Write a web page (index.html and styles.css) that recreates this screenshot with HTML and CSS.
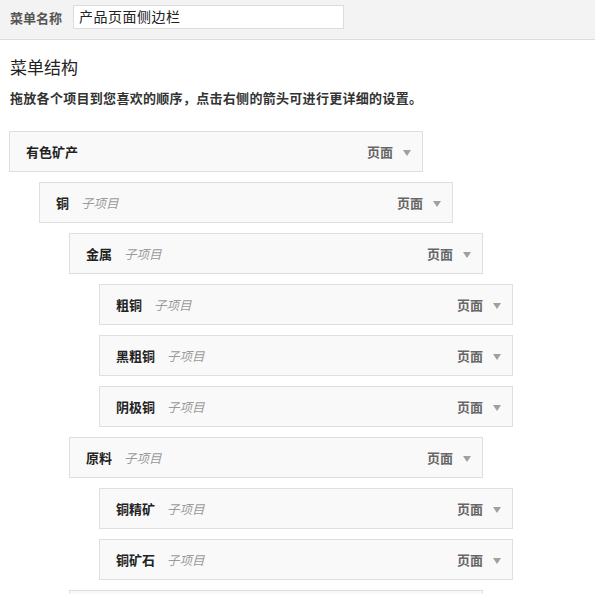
FILE: index.html
```html
<!DOCTYPE html>
<html lang="zh-CN">
<head>
<meta charset="utf-8">
<title>菜单</title>
<link rel="stylesheet" href="styles.css">
</head>
<body>
<div class="header">
  <label class="name-label">菜单名称</label>
  <div class="name-input">产品页面侧边栏</div>
</div>
<div class="main">
  <h2 class="title">菜单结构</h2>
  <p class="hint">拖放各个项目到您喜欢的顺序，点击右侧的箭头可进行更详细的设置。</p>
  <ul class="menu">
    <li class="item depth-0"><span class="item-title">有色矿产</span><span class="item-type">页面</span><span class="arrow"></span></li>
    <li class="item depth-1"><span class="item-title">铜</span><span class="item-sub">子项目</span><span class="item-type">页面</span><span class="arrow"></span></li>
    <li class="item depth-2"><span class="item-title">金属</span><span class="item-sub">子项目</span><span class="item-type">页面</span><span class="arrow"></span></li>
    <li class="item depth-3"><span class="item-title">粗铜</span><span class="item-sub">子项目</span><span class="item-type">页面</span><span class="arrow"></span></li>
    <li class="item depth-3"><span class="item-title">黑粗铜</span><span class="item-sub">子项目</span><span class="item-type">页面</span><span class="arrow"></span></li>
    <li class="item depth-3"><span class="item-title">阴极铜</span><span class="item-sub">子项目</span><span class="item-type">页面</span><span class="arrow"></span></li>
    <li class="item depth-2"><span class="item-title">原料</span><span class="item-sub">子项目</span><span class="item-type">页面</span><span class="arrow"></span></li>
    <li class="item depth-3"><span class="item-title">铜精矿</span><span class="item-sub">子项目</span><span class="item-type">页面</span><span class="arrow"></span></li>
    <li class="item depth-3"><span class="item-title">铜矿石</span><span class="item-sub">子项目</span><span class="item-type">页面</span><span class="arrow"></span></li>
    <li class="item depth-2"></li>
  </ul>
</div>
</body>
</html>
```

FILE: styles.css
```css
html, body {
  margin: 0;
  padding: 0;
  background: #fff;
  font-family: "Noto Sans CJK SC", "Noto Sans", sans-serif;
  color: #222;
}

.header {
  height: 39px;
  background: #f3f3f3;
  border-bottom: 1px solid #dcdcdc;
  display: flex;
  align-items: center;
  padding-left: 10px;
}

.name-label {
  font-size: 13px;
  font-weight: bold;
  color: #555;
  width: 63px;
  line-height: 18px;
  margin-top: -4px;
}

.name-input {
  box-sizing: border-box;
  width: 271px;
  height: 24px;
  margin-top: -5px;
  background: #fff;
  border: 1px solid #dcdcdc;
  font-size: 14px;
  letter-spacing: 0.5px;
  line-height: 21px;
  padding-left: 5px;
  color: #222;
}

.main {
  padding: 0 10px;
}

.title {
  margin: 15px 0 0;
  font-size: 17px;
  font-weight: normal;
  line-height: 24px;
  color: #222;
}

.hint {
  margin: 10px 0 0;
  font-size: 13px;
  font-weight: bold;
  letter-spacing: 0.3px;
  line-height: 18px;
  color: #333;
}

.menu {
  list-style: none;
  margin: 24px 0 0 -1px;
  padding: 0;
}

.item {
  box-sizing: border-box;
  width: 414px;
  height: 41px;
  margin-bottom: 10px;
  background: #f9f9f9;
  border: 1px solid #dfdfdf;
  display: flex;
  align-items: center;
  padding: 0 11px 0 16px;
}

.depth-1 { margin-left: 30px; }
.depth-2 { margin-left: 60px; }
.depth-3 { margin-left: 90px; }

.item-title {
  font-size: 13px;
  font-weight: bold;
  color: #222;
  line-height: 18px;
}

.item-sub {
  margin-left: 12px;
  font-size: 12.5px;
  font-style: italic;
  color: #9a9a9a;
  line-height: 18px;
}

.item-type {
  margin-left: auto;
  font-size: 13px;
  font-weight: bold;
  color: #666;
  line-height: 18px;
}

.arrow {
  margin-left: 10px;
  width: 0;
  height: 0;
  border-left: 4px solid transparent;
  border-right: 4px solid transparent;
  border-top: 6px solid #a0a0a0;
  margin-top: 2px;
}
```
